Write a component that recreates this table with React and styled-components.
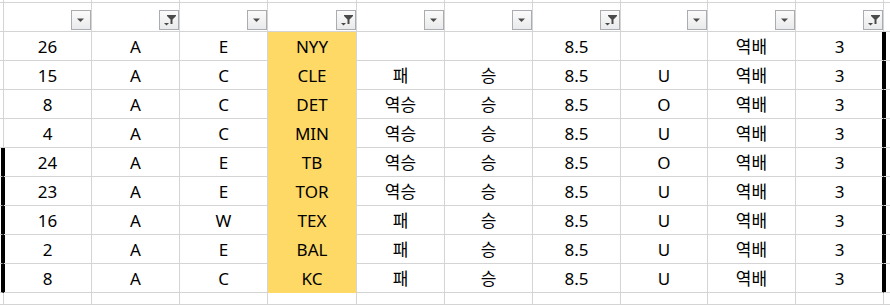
import React from "react";
import styled, { createGlobalStyle } from "styled-components";

const GlobalStyle = createGlobalStyle`
  html, body {
    margin: 0;
    padding: 0;
    background: #fff;
  }
  body {
    font-family: "Noto Sans", "Noto Sans CJK KR", sans-serif;
    overflow: hidden;
  }
`;

const GRID = "#d4d4d4";
const YELLOW = "#ffd966";
const WIDTHS = [88, 88, 88, 89, 88, 88, 88, 87, 88, 88];

const FILTERED = [false, true, false, true, false, false, true, false, false, true];

const ROWS = [
  ["26", "A", "E", "NYY", "", "", "8.5", "", "역배", "3"],
  ["15", "A", "C", "CLE", "패", "승", "8.5", "U", "역배", "3"],
  ["8", "A", "C", "DET", "역승", "승", "8.5", "O", "역배", "3"],
  ["4", "A", "C", "MIN", "역승", "승", "8.5", "U", "역배", "3"],
  ["24", "A", "E", "TB", "역승", "승", "8.5", "O", "역배", "3"],
  ["23", "A", "E", "TOR", "역승", "승", "8.5", "U", "역배", "3"],
  ["16", "A", "W", "TEX", "패", "승", "8.5", "U", "역배", "3"],
  ["2", "A", "E", "BAL", "패", "승", "8.5", "U", "역배", "3"],
  ["8", "A", "C", "KC", "패", "승", "8.5", "U", "역배", "3"],
];

const Sheet = styled.div`
  display: grid;
  grid-template-columns: 5px ${WIDTHS.map((w) => w + "px").join(" ")} 1fr;
  grid-template-rows: 3px 29px repeat(9, 29px) 1fr;
  width: 891px;
  height: 305px;
  margin-left: -1px;
`;

const Cell = styled.div`
  box-sizing: border-box;
  border-right: 1px solid ${(p) => (p.$rightBlack ? "#000" : GRID)};
  border-bottom: 1px solid ${(p) => (p.$fill ? p.$fill : GRID)};
  background: ${(p) => p.$fill || "#fff"};
  display: flex;
  align-items: center;
  justify-content: center;
  font-size: 17px;
  color: #000;
  line-height: 1;
  padding-top: 1px;
  box-shadow: ${(p) => p.$shadow || "none"};
`;

const Stub = styled.div`
  box-sizing: border-box;
  border-right: ${(p) => (p.$black ? "3px solid #000" : `1px solid ${GRID}`)};
  border-bottom: 1px solid ${GRID};
`;

const Tail = styled.div`
  box-sizing: border-box;
  border-bottom: 1px solid ${GRID};
  box-shadow: ${(p) => (p.$black ? "inset 2px 0 0 #000" : "none")};
`;

const HeaderCell = styled.div`
  box-sizing: border-box;
  border-right: 1px solid ${GRID};
  border-bottom: 1px solid ${GRID};
  display: flex;
  align-items: flex-end;
  justify-content: flex-end;
  padding: 0 0 1px 0;
`;

const FilterButton = styled.div`
  box-sizing: border-box;
  width: 20px;
  height: 20px;
  border: 1px solid #a9acb0;
  background: linear-gradient(#fbfbfb, #e9eaeb);
  display: flex;
  align-items: center;
  justify-content: center;
`;

const ArrowIcon = () => (
  <svg width="18" height="18" viewBox="0 0 18 18">
    <path d="M5 7.5 H12 L8.5 11 Z" fill="#4a4a4a" />
  </svg>
);

const FunnelIcon = () => (
  <svg width="18" height="18" viewBox="0 0 18 18">
    <path d="M7 4 H16 V5 L12.5 8.5 V13 H10.5 V8.5 L7 5 Z" fill="#4a4a4a" />
    <path d="M4 12 H9 L6.5 14.5 Z" fill="#4a4a4a" />
  </svg>
);

const App = () => (
  <>
    <GlobalStyle />
    <Sheet>
      <Stub />
      {WIDTHS.map((_, i) => (
        <Stub key={"top" + i} />
      ))}
      <Tail />

      <Stub />
      {FILTERED.map((f, i) => (
        <HeaderCell key={"h" + i}>
          <FilterButton>{f ? <FunnelIcon /> : <ArrowIcon />}</FilterButton>
        </HeaderCell>
      ))}
      <Tail />

      {ROWS.map((row, r) => {
        const leftBlack = r >= 4;
        return (
          <React.Fragment key={"r" + r}>
            <Stub $black={leftBlack} />
            {row.map((v, c) => (
              <Cell
                key={c}
                $fill={c === 3 ? YELLOW : null}
                $rightBlack={c === 9}
                $shadow={
                  c === 0 && leftBlack
                    ? "inset 1px 0 0 #000"
                    : c === 9
                    ? "inset -1px 0 0 #000"
                    : null
                }
              >
                {v}
              </Cell>
            ))}
            <Tail $black />
          </React.Fragment>
        );
      })}

      <Stub />
      {WIDTHS.map((_, i) => (
        <Cell key={"b" + i} />
      ))}
      <Tail />
    </Sheet>
  </>
);

export default App;
